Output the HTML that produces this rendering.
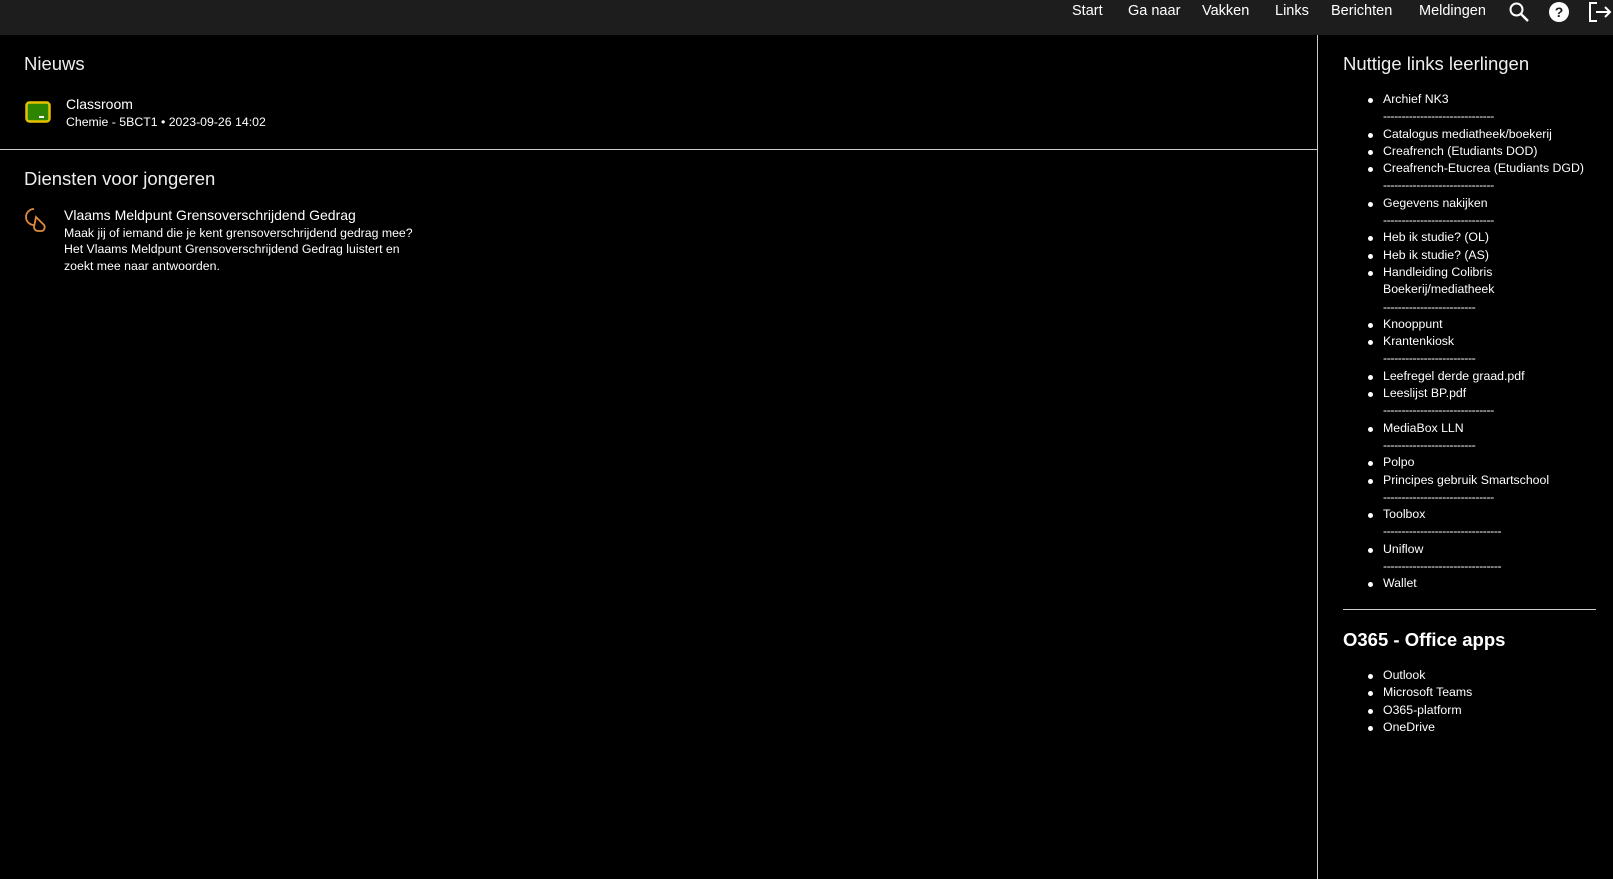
<!DOCTYPE html>
<html><head><meta charset="utf-8"><style>
*{margin:0;padding:0;box-sizing:border-box}
body{width:1613px;height:879px;background:#000;color:#fff;font-family:"Liberation Sans",sans-serif;position:relative;overflow:hidden}
.top{position:absolute;left:0;top:0;width:1613px;height:35px;background:#1d1d1d}
.nav{position:absolute;top:2px;font-size:14.5px;line-height:18px}
.a{position:absolute;white-space:nowrap}
h2{position:absolute;font-weight:normal;font-size:18.5px;white-space:nowrap;color:#eee}
.vl{position:absolute;left:1317px;top:35px;width:1px;height:844px;background:#ccc}
.hl{position:absolute;height:1px;background:#ccc}
ul{position:absolute;left:1383px;list-style:none;font-size:12.3px;line-height:17.3px}
li{position:relative;white-space:nowrap}
li.d{letter-spacing:-0.4px}
li.b::before{content:"";position:absolute;left-15px;left:-15px;top:7px;width:5px;height:5px;border-radius:50%;background:#fff}
</style></head><body>
<div class="top"></div>
<div class="nav a" style="left:1072px">Start</div>
<div class="nav a" style="left:1128px">Ga naar</div>
<div class="nav a" style="left:1202px">Vakken</div>
<div class="nav a" style="left:1275px">Links</div>
<div class="nav a" style="left:1331px">Berichten</div>
<div class="nav a" style="left:1419px">Meldingen</div>
<svg class="a" style="left:1508px;top:1px" width="22" height="22" viewBox="0 0 22 22"><circle cx="8.5" cy="8.5" r="6" fill="none" stroke="#fff" stroke-width="2"/><path d="M13 13l7 7" stroke="#fff" stroke-width="2.4"/></svg>
<svg class="a" style="left:1548px;top:1px" width="22" height="22" viewBox="0 0 22 22"><circle cx="11" cy="11" r="10" fill="#fff"/><text x="11" y="16" font-size="14" font-weight="bold" text-anchor="middle" fill="#1d1d1d" font-family="Liberation Sans">?</text></svg>
<svg class="a" style="left:1587px;top:0px" width="26" height="24" viewBox="0 0 26 24"><path d="M10 3H3v18h7" fill="none" stroke="#fff" stroke-width="2"/><path d="M9 12h14M18 7l5 5-5 5" fill="none" stroke="#fff" stroke-width="2"/></svg>

<h2 style="left:24px;top:53px">Nieuws</h2>
<svg class="a" style="left:25px;top:101px" width="26" height="22" viewBox="0 0 26 22"><rect x="1.5" y="1.5" width="23" height="19" rx="3" fill="#2e8500" stroke="#e5c100" stroke-width="2.5"/><rect x="14" y="15" width="5" height="2" fill="#fff"/></svg>
<div class="a" style="left:66px;top:96px;font-size:14px">Classroom</div>
<div class="a" style="left:66px;top:115px;font-size:12.3px">Chemie - 5BCT1 • 2023-09-26 14:02</div>
<div class="hl" style="left:0;top:149px;width:1318px"></div>

<h2 style="left:24px;top:168px">Diensten voor jongeren</h2>
<svg class="a" style="left:24px;top:207px" width="24" height="26" viewBox="0 0 24 26"><path d="M10 2a8 8 0 1 0 0 16M12 10l8 8a4 4 0 0 1-2 6H14a4 4 0 0 1-4-4z" fill="none" stroke="#e08a3c" stroke-width="1.8"/></svg>
<div class="a" style="left:64px;top:207px;font-size:14px">Vlaams Meldpunt Grensoverschrijdend Gedrag</div>
<div class="a" style="left:64px;top:225px;font-size:12.3px;line-height:16.3px">Maak jij of iemand die je kent grensoverschrijdend gedrag mee?<br>Het Vlaams Meldpunt Grensoverschrijdend Gedrag luistert en<br>zoekt mee naar antwoorden.</div>

<div class="vl"></div>
<h2 style="left:1343px;top:53px">Nuttige links leerlingen</h2>
<ul style="top:91px">
<li class="b">Archief NK3</li><li class="d">------------------------------</li>
<li class="b">Catalogus mediatheek/boekerij</li>
<li class="b">Creafrench (Etudiants DOD)</li>
<li class="b">Creafrench-Etucrea (Etudiants DGD)</li><li class="d">------------------------------</li>
<li class="b">Gegevens nakijken</li><li class="d">------------------------------</li>
<li class="b">Heb ik studie? (OL)</li>
<li class="b">Heb ik studie? (AS)</li>
<li class="b">Handleiding Colibris</li><li>Boekerij/mediatheek</li><li class="d">-------------------------</li>
<li class="b">Knooppunt</li>
<li class="b">Krantenkiosk</li><li class="d">-------------------------</li>
<li class="b">Leefregel derde graad.pdf</li>
<li class="b">Leeslijst BP.pdf</li><li class="d">------------------------------</li>
<li class="b">MediaBox LLN</li><li class="d">-------------------------</li>
<li class="b">Polpo</li>
<li class="b">Principes gebruik Smartschool</li><li class="d">------------------------------</li>
<li class="b">Toolbox</li><li class="d">--------------------------------</li>
<li class="b">Uniflow</li><li class="d">--------------------------------</li>
<li class="b">Wallet</li>
</ul>
<div class="hl" style="left:1343px;top:609px;width:253px"></div>
<h2 style="left:1343px;top:629px;font-weight:bold;font-size:18.5px;color:#fff">O365 - Office apps</h2>
<ul style="top:667px">
<li class="b">Outlook</li><li class="b">Microsoft Teams</li><li class="b">O365-platform</li><li class="b">OneDrive</li>
</ul>
</body></html>
